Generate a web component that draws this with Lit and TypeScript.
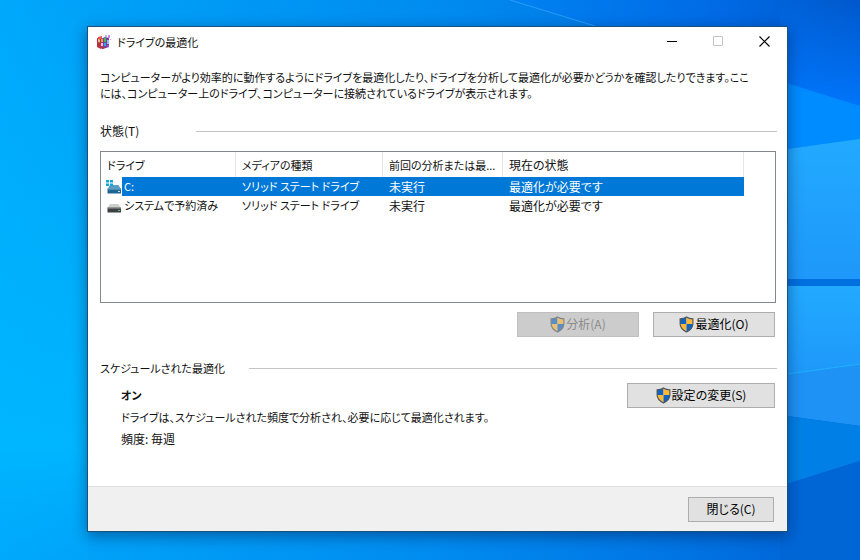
import { LitElement, html, css, svg } from "lit";
import { customElement, property, state } from "lit/decorators.js";
import { classMap } from "lit/directives/class-map.js";

interface Drive {
  name: string;
  media: string;
  last: string;
  status: string;
  system: boolean;
}

const drives: Drive[] = [
  { name: "C:", media: "ソリッド ステート ドライブ", last: "未実行", status: "最適化が必要です", system: true },
  { name: "システムで予約済み", media: "ソリッド ステート ドライブ", last: "未実行", status: "最適化が必要です", system: false },
];

const shield = html`<svg class="shield" viewBox="0 0 16 18" width="15" height="17" aria-hidden="true">
  <path d="M8 1C6 2.6 3.6 3 1.2 3v5.5H8z" fill="#1163bd" />
  <path d="M8 1c2 1.600 4.400 2 6.800 2v5.500H8z" fill="#fdb935" />
  <path d="M1.200 8.500H8V17c-4-2-6.800-4.500-6.800-8.500z" fill="#fdb935" />
  <path d="M14.800 8.500H8V17c4-2 6.800-4.500 6.800-8.500z" fill="#1163bd" />
  <path d="M8 1C6 2.600 3.600 3 1.200 3v5.500c0 4 2.800 6.500 6.800 8.500 4-2 6.800-4.500 6.800-8.500V3C12.400 3 10 2.600 8 1z"
    fill="none" stroke="#4b5560" stroke-width="1.200" />
</svg>`;

const flag = svg`<g fill="#12a5d8">
  <rect x="0" y="0" width="3" height="2.500" /><rect x="4" y="0" width="3" height="2.500" />
  <rect x="0" y="3.500" width="3" height="2.500" /><rect x="4" y="3.500" width="3" height="2.500" />
</g>`;

const driveIcon = (system: boolean) => html`<svg class="drive" viewBox="0 0 16 14" width="16" height="14" aria-hidden="true">
  <path d="M4 5h8.500L15 9H1.500z" fill=${system ? "#5b9cc4" : "#cdcdcd"} />
  <rect x="1.500" y="8.500" width="13.500" height="5" rx=".5" fill=${system ? "#1d6694" : "#3d4043"} />
  <rect x="1.500" y="8.500" width="13.500" height="1" fill=${system ? "#7db6d4" : "#a0a0a0"} />
  <rect x="12" y="11" width="2" height="1" fill=${system ? "#b8f0e4" : "#4fd08a"} />
  ${system ? flag : null}
</svg>`;

@customElement("uac-button")
export class UacButton extends LitElement {
  @property({ type: Boolean }) shield = false;
  @property({ type: Boolean }) disabled = false;

  static styles = css`
    :host {
      display: block;
    }
    .button {
      display: flex;
      align-items: center;
      justify-content: center;
      gap: 1px;
      box-sizing: border-box;
      width: 100%;
      height: 25px;
      margin: 0;
      padding: 0 0 1px;
      border: 1px solid #adadad;
      border-radius: 0;
      background: #e1e1e1;
      color: #000;
      font: inherit;
      font-feature-settings: inherit;
    }
    .button:disabled {
      border-color: #bfbfbf;
      background: #cccccc;
      color: #8b8b8b;
    }
    .button:disabled .shield {
      opacity: 0.6;
    }
    .shield {
      flex: none;
    }
  `;

  render() {
    return html`<button class="button" type="button" ?disabled=${this.disabled}>
      ${this.shield ? shield : null}<span><slot></slot></span>
    </button>`;
  }
}

@customElement("app-root")
export class AppRoot extends LitElement {
  @state() private selected = 0;

  static styles = css`
    :host {
      display: flex;
      box-sizing: border-box;
      min-height: 100vh;
      padding: 26px 72px 28px 87px;
      position: relative;
      overflow: hidden;
      background: #0096f0;
      color: #111;
      font: 12px/16px "Noto Sans CJK JP", sans-serif;
      font-feature-settings: "palt";
    }
    .wallpaper {
      position: absolute;
      inset: 0;
      width: 100%;
      height: 100%;
    }
    .window {
      position: relative;
      flex: 1;
      min-width: 0;
      display: flex;
      flex-direction: column;
      border: 1px solid #17517c;
      background: #fff;
      box-shadow: 0 4px 14px rgba(0, 20, 60, 0.45);
    }
    .titlebar {
      display: flex;
      align-items: center;
      height: 29px;
      padding-left: 8px;
    }
    .title {
      flex: 1;
      margin: 0 0 0 5px;
      font-size: 11px;
      font-weight: 400;
    }
    .caption {
      display: grid;
      place-items: center;
      width: 46px;
      height: 29px;
      padding: 0;
      border: 0;
      background: none;
    }
    .content {
      flex: 1;
      padding: 13px 10px 0 12px;
    }
    .intro {
      margin: 0;
      font-size: 11px;
    }
    .line {
      display: block;
      white-space: nowrap;
    }
    .section {
      display: flex;
      align-items: center;
      margin: 0;
      font-size: 12px;
      font-weight: 400;
    }
    .section::after {
      content: "";
      flex: 1;
      height: 1px;
      background: #c4c4c4;
    }
    .heading {
      width: 96px;
    }
    .heading.wide {
      width: 149px;
      font-size: 11px;
    }
    .status {
      margin-top: 22px;
    }
    .schedule {
      margin-top: 23px;
    }
    .list {
      box-sizing: border-box;
      height: 152px;
      margin: 12px 1px 0 0;
      border: 1px solid #828790;
    }
    .drives {
      width: calc(100% - 31px);
      table-layout: fixed;
      border-spacing: 0;
    }
    .col-drive {
      width: 135px;
    }
    .col-media {
      width: 147px;
    }
    .col-last {
      width: 120px;
    }
    th {
      height: 25px;
      box-sizing: border-box;
      padding: 0 0 0 6px;
      border-right: 1px solid #e5e5e5;
      font-weight: 400;
      text-align: left;
      white-space: nowrap;
    }
    td {
      height: 19px;
      padding: 0 0 0 6px;
      line-height: 19px;
      white-space: nowrap;
    }
    .kana {
      font-size: 11px;
    }
    .namecell {
      padding: 0;
    }
    .name {
      display: flex;
      align-items: center;
    }
    .drive {
      flex: none;
      padding: 0 0 0 5px;
    }
    .label {
      flex: 1;
      padding-left: 2px;
    }
    .selected td:not(.namecell),
    .selected .label {
      background: #0078d7;
      color: #fff;
    }
    .actions {
      display: flex;
      justify-content: flex-end;
      gap: 14px;
      margin: 9px 2px 0 0;
    }
    .action {
      width: 122px;
    }
    .details {
      display: flex;
      justify-content: space-between;
      align-items: flex-start;
      margin: 7px 2px 0 21px;
    }
    .facts {
      display: grid;
      gap: 6px;
      padding-top: 4px;
    }
    .fact {
      margin: 0;
    }
    .strong {
      font-size: 11px;
      font-weight: 700;
    }
    .settings {
      width: 148px;
    }
    .footer {
      display: flex;
      justify-content: flex-end;
      padding: 10px 13px 9px;
      border-top: 1px solid #dfdfdf;
      background: #f0f0f0;
    }
    .close {
      width: 86px;
    }
  `;

  private wallpaper() {
    return html`<svg class="wallpaper" viewBox="0 0 860 560" preserveAspectRatio="none" aria-hidden="true">
      <defs>
        <linearGradient id="base" x1="0" y1="0" x2="1" y2="0">
          <stop offset="0" stop-color="#00a8fc" />
          <stop offset="0.1" stop-color="#00a2f8" />
          <stop offset="0.5" stop-color="#008cf0" />
          <stop offset="0.75" stop-color="#0078e6" />
          <stop offset="1" stop-color="#0060d4" />
        </linearGradient>
        <linearGradient id="glow" x1="0" y1="0" x2="0" y2="1">
          <stop offset="0" stop-color="#00b8ff" stop-opacity="0" />
          <stop offset="0.8" stop-color="#00b8ff" stop-opacity="0.9" />
          <stop offset="1" stop-color="#00b0ff" stop-opacity="0.1" />
        </linearGradient>
        <linearGradient id="corner" x1="0" y1="0" x2="1" y2="0">
          <stop offset="0" stop-color="#0082f2" />
          <stop offset="0.6" stop-color="#006ae4" />
          <stop offset="1" stop-color="#0058cc" />
        </linearGradient>
        <linearGradient id="lift" x1="0" y1="0" x2="0" y2="1">
          <stop offset="0" stop-color="#0078ff" stop-opacity="0" />
          <stop offset="1" stop-color="#0078ff" stop-opacity="0.9" />
        </linearGradient>
        <linearGradient id="pane" x1="0" y1="0" x2="0" y2="1">
          <stop offset="0" stop-color="#22aaff" />
          <stop offset="1" stop-color="#1e98fa" />
        </linearGradient>
      </defs>
      <rect width="860" height="560" fill="url(#base)" />
      <rect width="88" height="560" fill="url(#glow)" />
      <path d="M510 0H860V106L780 81L595 26z" fill="url(#corner)" />
      <path d="M510 0L595 26" stroke="#2a9cf6" />
      <rect x="780" width="80" height="106" fill="url(#lift)" />
      <path d="M780 81L860 106V140L780 150z" fill="#008cff" />
      <path d="M780 150L860 139V279H780z" fill="url(#pane)" />
      <rect x="780" y="279" width="80" height="7" fill="#0070e0" />
      <path d="M780 286H860V364L780 375z" fill="url(#pane)" />
      <path d="M780 375L860 364V426L780 415z" fill="#1f92f5" />
      <path d="M780 375L860 364" stroke="#20b4ff" />
      <path d="M780 415L860 426V461L780 486z" fill="#0080e6" />
      <path d="M780 486L860 461V560H780z" fill="#0066d6" />
    </svg>`;
  }

  render() {
    return html`${this.wallpaper()}
      <main class="window">
        <header class="titlebar">
          <svg viewBox="0 0 16 16" width="16" height="16" aria-hidden="true">
            <path d="M1 4l4 1v10l-4-2z" fill="#b8323c" />
            <path d="M2 3l4-1v3H2z" fill="#e2574c" />
            <path d="M5 5l4-2 4 1v9l-6 2-2-1z" fill="#7a3f9e" />
            <path d="M2 5l2 .5v3L2 8z" fill="#f0b8a0" />
            <rect x="5" y="5" width="2" height="3" fill="#f0a030" />
            <rect x="8" y="4" width="2" height="4" fill="#42b95c" />
            <rect x="5" y="9" width="2" height="3" fill="#f4c0d4" />
            <rect x="8" y="9" width="2" height="3" fill="#32a4dc" />
            <rect x="11" y="6" width="2" height="4" fill="#8fb8f0" />
            <rect x="11" y="11" width="2" height="2" fill="#a24bc8" />
            <path d="M4 13h5l-2 2-3-1z" fill="#c42f3f" />
            <rect x="9" y="1" width="2" height="2" fill="#9bc8f0" />
            <rect x="12" y="1" width="2" height="3" fill="#c58ae6" />
            <rect x="14" y="5" width="1" height="1" fill="#d89bf0" />
          </svg>
          <h1 class="title">ドライブの最適化</h1>
          <button class="caption" type="button" aria-label="最小化">
            <svg width="11" height="11" viewBox="0 0 11 11"><path d="M0 5.500h10" stroke="#000" /></svg>
          </button>
          <button class="caption" type="button" aria-label="最大化" disabled>
            <svg width="11" height="11" viewBox="0 0 11 11"><path d="M.5.500h9v9h-9z" fill="none" stroke="#c4c4c4" /></svg>
          </button>
          <button class="caption" type="button" aria-label="閉じる">
            <svg width="11" height="11" viewBox="0 0 11 11"><path d="M.5.500l10 10M10.500.500l-10 10" stroke="#000" stroke-width="1.200" /></svg>
          </button>
        </header>
        <div class="content">
          <p class="intro">
            <span class="line">コンピューターがより効率的に動作するようにドライブを最適化したり、ドライブを分析して最適化が必要かどうかを確認したりできます。ここ</span>
            <span class="line">には、コンピューター上のドライブ、コンピューターに接続されているドライブが表示されます。</span>
          </p>
          <h2 class="section status"><span class="heading">状態(T)</span></h2>
          <div class="list">
            <table class="drives">
              <colgroup>
                <col class="col-drive" /><col class="col-media" /><col class="col-last" /><col />
              </colgroup>
              <thead>
                <tr>
                  <th class="kana">ドライブ</th>
                  <th class="kana">メディアの種類</th>
                  <th class="kana">前回の分析または最...</th>
                  <th>現在の状態</th>
                </tr>
              </thead>
              <tbody>
                ${drives.map(
                  (d, i) => html`<tr class=${classMap({ selected: i === this.selected })} @click=${() => (this.selected = i)}>
                    <td class="namecell kana"><div class="name">${driveIcon(d.system)}<span class="label">${d.name}</span></div></td>
                    <td class="kana">${d.media}</td>
                    <td>${d.last}</td>
                    <td>${d.status}</td>
                  </tr>`
                )}
              </tbody>
            </table>
          </div>
          <div class="actions">
            <uac-button class="action" shield disabled>分析(A)</uac-button>
            <uac-button class="action" shield>最適化(O)</uac-button>
          </div>
          <h2 class="section schedule"><span class="heading wide">スケジュールされた最適化</span></h2>
          <div class="details">
            <div class="facts">
              <p class="fact strong">オン</p>
              <p class="fact kana">ドライブは、スケジュールされた頻度で分析され、必要に応じて最適化されます。</p>
              <p class="fact">頻度: 毎週</p>
            </div>
            <uac-button class="settings" shield>設定の変更(S)</uac-button>
          </div>
        </div>
        <footer class="footer"><uac-button class="close">閉じる(C)</uac-button></footer>
      </main>`;
  }
}
